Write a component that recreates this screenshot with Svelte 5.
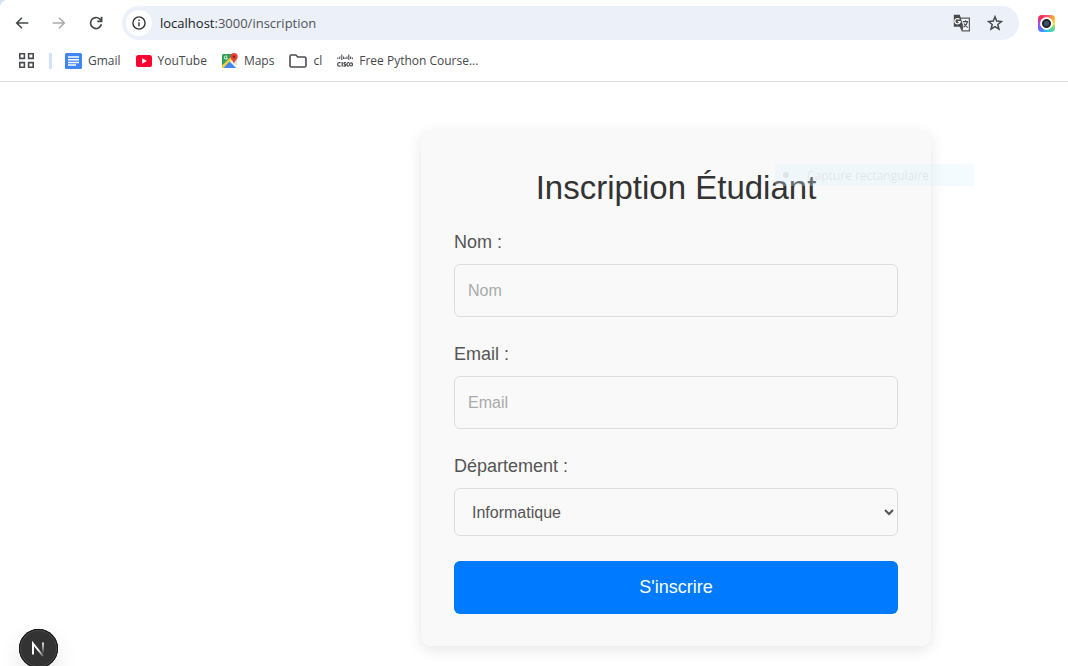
<script>
  let nom = $state('');
  let email = $state('');
  let departement = $state('Informatique');
</script>

<header class="browser">
  <div class="toolbar">
    <button class="nav" type="button" aria-label="Back">
      <svg width="16" height="16" viewBox="0 0 16 16" fill="none" stroke="#45484b" stroke-width="1.6"><path d="M14.300 8H3M8 2.700 2.700 8 8 13.300" /></svg>
    </button>
    <button class="nav" type="button" aria-label="Forward">
      <svg width="16" height="16" viewBox="0 0 16 16" fill="none" stroke="#a9abad" stroke-width="1.6"><path d="M1.700 8H13M8 2.700 13.300 8 8 13.300" /></svg>
    </button>
    <button class="nav" type="button" aria-label="Reload">
      <svg width="16" height="16" viewBox="0 0 16 16" fill="none" stroke="#45484b" stroke-width="1.700"><path d="M13.400 9.300A5.500 5.500 0 1 1 12 4.200L13.600 6" /><path d="M13.600 1.800v4.600H9.200" /></svg>
    </button>
    <div class="address">
      <span class="info">
        <svg width="14" height="14" viewBox="0 0 14 14" fill="none" stroke="#303236" stroke-width="1.4"><circle cx="7" cy="7" r="6.1" /><path d="M7 6.300v4M7 3.500v1.500" /></svg>
      </span>
      <span class="url">localhost<span>:3000/inscription</span></span>
      <button class="tool" type="button" aria-label="Translate">
        <svg width="18" height="18" viewBox="0 0 18 18">
          <path d="M7 4.200h9.400v12.600H9.200L7 12z" fill="#f4f6fa" stroke="#5a5c60" stroke-width="1.200" />
          <path d="M.8.8h6l3.600 12H.8z" fill="#47494d" />
          <path d="M9.800 7.600h5.400M12.500 6.200v1.400M14.400 7.800c-.5 2.600-2.300 4.300-3.600 5.200M11 9.400c.9 2 2.200 3.400 3.800 4.200" fill="none" stroke="#47494d" stroke-width="1.100" />
          <path d="m7.400 12.800 3 0-1 3.800z" fill="#47494d" />
          <path d="M6.500 5.400A2.700 2.700 0 1 0 7.200 7.600H4.800" fill="none" stroke="#fff" stroke-width="1.300" />
        </svg>
      </button>
      <button class="tool" type="button" aria-label="Bookmark">
        <svg width="16" height="16" viewBox="0 0 16 16" fill="none" stroke="#45484b" stroke-width="1.500"><path d="m8 1.800 1.700 4.300 4.700.4-3.600 3 1.200 4.700L8 11.700l-4 2.500 1.200-4.700-3.600-3 4.700-.4z" /></svg>
      </button>
    </div>
    <button class="extension" type="button" aria-label="Extension">
      <span class="lens"></span>
    </button>
  </div>

  <nav class="bookmarks">
    <button class="apps" type="button" aria-label="Apps">
      <svg width="15" height="15" viewBox="0 0 15 15" fill="none" stroke="#4a4c50" stroke-width="1.600"><path d="M.8.8h4.600v4.600H.8zM9.600.8h4.600v4.600H9.600zM.8 9.600h4.600v4.600H.8zM9.600 9.600h4.600v4.600H9.600z" /></svg>
    </button>
    <span class="divider"></span>
    <a href="#gmail">
      <svg width="17" height="16" viewBox="0 0 17 16"><rect width="17" height="16" rx="1.500" fill="#4285f4" /><path d="M3 4h11M3 6.700h11M3 9.400h11M3 12.100h8" stroke="#fff" stroke-width="1.500" /></svg>
      Gmail
    </a>
    <a href="#youtube">
      <svg width="16" height="12" viewBox="0 0 16 12"><rect width="16" height="12" rx="2.600" fill="#ff0033" /><path d="M6.200 3.300v5.400L10.900 6z" fill="#fff" /></svg>
      YouTube
    </a>
    <a href="#maps">
      <svg width="16" height="16" viewBox="0 0 16 16">
        <rect y="1" width="15" height="14" rx="1.500" fill="#e2e5e8" />
        <path d="M1.500 1H10L7.500 8 0 14V2.500Q0 1 1.500 1z" fill="#2da15a" />
        <path d="M0 12.500 10 3l2 3L2.500 15H0z" fill="#fbcb3f" />
        <path d="m7.500 8.600 6.500 6.400H1.500z" fill="#4285f4" />
        <path d="m8.500 7.500 6.500 6.300" stroke="#fff" stroke-width="1.100" />
        <path d="M5.200 3.600A1.600 1.600 0 1 0 5.500 5H4" fill="none" stroke="#fff" stroke-width=".9" />
        <path d="M12 0a3.700 3.700 0 0 1 3.700 3.700c0 2.700-3 3.500-3.700 7.200-.7-3.700-3.700-4.500-3.700-7.200A3.700 3.700 0 0 1 12 0z" fill="#e44435" />
        <circle cx="12" cy="3.700" r="1.300" fill="#8c1d18" />
      </svg>
      Maps
    </a>
    <a href="#cl">
      <svg width="18" height="14" viewBox="0 0 18 14" fill="none" stroke="#4a4c50" stroke-width="1.600"><path d="M2.200 1h4.600l2 2h6.700q1.500 0 1.500 1.500v7q0 1.500-1.500 1.500H2.300Q1 13 1 11.500v-9Q1 1 2.200 1z" /></svg>
      cl
    </a>
    <a href="#python">
      <svg width="16" height="14" viewBox="0 0 16 14" fill="none" stroke="#505154" stroke-width="1.100">
        <path d="M.8 3.500V5M2.800 2.500V5M4.800.5v5.500M6.600 2.500V5M8.200 3.500V5M10 2.500V5M11.800.5v5.500M13.600 2.500V5M15.400 3.500V5" />
        <path d="M3.600 8.700H2.200q-1.500 0-1.500 1.700t1.500 1.700h1.400M5.200 8v4.500M9 8.600H7.300q-.8.900.3 1.500 1.600.5.700 1.900H6.500M12 8.700h-.8q-1.300.2-1.300 1.700t1.300 1.700h.8" stroke-width="1.300" />
        <circle cx="14" cy="10.400" r="1.500" stroke-width="1.300" />
      </svg>
      Free Python Course...
    </a>
  </nav>
</header>

<main>
  <form class="card" onsubmit={(event) => event.preventDefault()}>
    <h1>Inscription Étudiant</h1>
    <div class="field">
      <label for="nom">Nom :</label>
      <input id="nom" type="text" placeholder="Nom" bind:value={nom} />
    </div>
    <div class="field">
      <label for="email">Email :</label>
      <input id="email" type="email" placeholder="Email" bind:value={email} />
    </div>
    <div class="field">
      <label for="departement">Département :</label>
      <select id="departement" bind:value={departement}>
        <option>Informatique</option>
      </select>
    </div>
    <button class="submit" type="submit">S'inscrire</button>
    <div class="capture"><span class="dot"></span><span>Capture rectangulaire</span></div>
  </form>
</main>

<button class="devtools" type="button" aria-label="Next.js">
  <svg width="39" height="39" viewBox="0 0 39 39" fill="none">
    <defs>
      <linearGradient id="stem" x1="0" y1="13" x2="0" y2="25" gradientUnits="userSpaceOnUse"><stop stop-color="#fff" /><stop offset="1" stop-color="#fff" stop-opacity="0" /></linearGradient>
      <linearGradient id="slant" x1="20" y1="20" x2="25" y2="27" gradientUnits="userSpaceOnUse"><stop stop-color="#fff" /><stop offset="1" stop-color="#fff" stop-opacity=".2" /></linearGradient>
    </defs>
    <path d="M14 25.500V14.500L24 27" stroke="url(#slant)" stroke-width="2" />
    <path d="M24 13.500v11" stroke="url(#stem)" stroke-width="1.800" />
  </svg>
</button>

<style>
  :global(body) {
    margin: 0;
    overflow: hidden;
    background: #fff;
    font-family: "Liberation Sans", Arial, sans-serif;
  }

  button {
    padding: 0;
    border: 0;
    background: none;
    font: inherit;
  }

  svg {
    display: block;
    flex: none;
  }

  .browser {
    border-bottom: 1px solid #dedfe1;
    font-family: "Open Sans", "Noto Sans", sans-serif;
    color: #45484b;
    background: radial-gradient(circle at 8px 8px, #fff 8px, #d3e3fd 8px) 0 0 / 8px 8px no-repeat;
  }

  .toolbar {
    display: flex;
    align-items: center;
    padding: 6px 21px 0 14px;
  }

  .nav {
    display: grid;
    width: 16px;
    height: 34px;
    margin-right: 21px;
    place-items: center;
  }

  .address {
    display: flex;
    flex: 1;
    align-items: center;
    height: 34px;
    margin-right: 19px;
    padding: 0 16px 0 4px;
    border-radius: 17px;
    background: #ecf0f9;
    gap: 16px;
  }

  .nav:nth-child(3) {
    margin-right: 18px;
  }

  .info {
    display: grid;
    width: 26px;
    height: 26px;
    border-radius: 50%;
    background: #fff;
    place-items: center;
  }

  .url {
    flex: 1;
    margin-left: -8px;
    font-size: 13px;
    line-height: 20px;
    color: #202124;
  }

  .url span {
    color: #505357;
  }

  .extension {
    display: grid;
    width: 17px;
    height: 17px;
    margin-right: -8px;
    border-radius: 4px;
    background: conic-gradient(#ff4b93, #ff9d2e 45deg, #ffe14d 90deg, #62d989 125deg, #24c7ef 180deg, #567bff 220deg, #a64bff 270deg, #ff2c3e 320deg, #ff4b93);
    place-items: center;
  }

  .lens {
    box-sizing: border-box;
    width: 13px;
    height: 13px;
    border: 1px solid #fff;
    border-radius: 50%;
    background: radial-gradient(circle, #3d5568 2px, #20252d 3px, #20252d 4px, #fff 5px);
  }

  .bookmarks {
    display: flex;
    align-items: center;
    height: 41px;
    padding-left: 19px;
    font-size: 12px;
    gap: 15px;
  }

  .bookmarks a {
    display: flex;
    align-items: center;
    color: inherit;
    line-height: 18px;
    text-decoration: none;
    white-space: nowrap;
    gap: 6px;
  }

  .divider {
    width: 3px;
    height: 16px;
    margin-right: -2px;
    background: #d3e3fd;
  }

  main {
    padding: 48px 0 20px 284px;
  }

  .card {
    position: relative;
    display: flex;
    box-sizing: border-box;
    max-width: 510px;
    margin: 0 auto;
    padding: 34px 33px 32px;
    border-radius: 10px;
    background: #f9f9f9;
    box-shadow: 0 4px 15px rgba(0, 0, 0, 0.1);
    flex-direction: column;
  }

  h1 {
    margin: 0 0 20px;
    font-size: 33px;
    font-weight: 400;
    line-height: 48px;
    text-align: center;
    color: #333;
  }

  .field {
    display: flex;
    margin-bottom: 27px;
    flex-direction: column;
    gap: 12px;
  }

  .field:nth-of-type(3) {
    margin-bottom: 25px;
  }

  label {
    font-size: 18px;
    line-height: 20px;
    color: #555;
  }

  input,
  select {
    box-sizing: border-box;
    width: 100%;
    height: 53px;
    padding: 0 13px;
    border: 1px solid #ddd;
    border-radius: 6px;
    background-color: #f9f9f9;
    font: 16px "Liberation Sans", Arial, sans-serif;
    color: #555;
  }

  select {
    height: 48px;
    padding-right: 0;
  }

  input::placeholder {
    color: #aaa;
  }

  .submit {
    height: 53px;
    border-radius: 6px;
    background: #007bff;
    font-size: 18px;
    color: #fff;
  }

  .capture {
    position: absolute;
    top: 34px;
    left: 354px;
    display: flex;
    align-items: center;
    width: 199px;
    height: 22px;
    background: rgba(220, 242, 255, 0.3);
    font: 12px "Open Sans", "Noto Sans", sans-serif;
    color: rgba(120, 110, 110, 0.14);
    gap: 18px;
  }

  .dot {
    width: 6px;
    height: 6px;
    margin-left: 8px;
    border-radius: 50%;
    background: currentColor;
  }

  .devtools {
    position: fixed;
    bottom: -2px;
    left: 19px;
    box-sizing: border-box;
    width: 39px;
    height: 39px;
    border-radius: 50%;
    background: #333;
    box-shadow: inset 0 0 0 1px #171717, inset 0 0 0 2px #4a4a4a, 0 12px 24px rgba(0, 0, 0, 0.1);
  }
</style>
